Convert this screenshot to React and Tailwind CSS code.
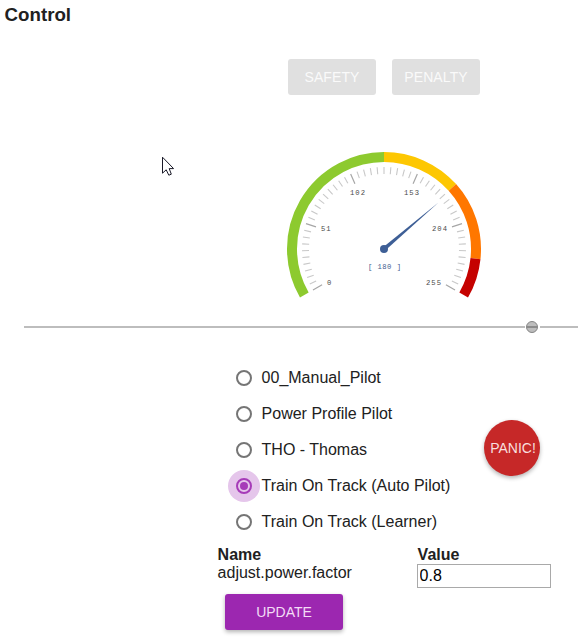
import React from "react";

const CX = 104;
const CY = 104;

const polar = (r, deg) => {
  const a = (deg * Math.PI) / 180;
  return [CX + r * Math.sin(a), CY - r * Math.cos(a)];
};

const arc = (from, to) => {
  const [x1, y1] = polar(92, from);
  const [x2, y2] = polar(92, to);
  return `M${x1} ${y1} A92 92 0 ${to - from > 180 ? 1 : 0} 1 ${x2} ${y2}`;
};

const BANDS = [
  { from: -120, to: 0, color: "#8dca2f" },
  { from: 0, to: 48, color: "#fdc702" },
  { from: 48, to: 96, color: "#ff7700" },
  { from: 96, to: 120, color: "#c50200" },
];

const LABELS = [
  { text: "0", x: 47, y: 140, w: 4.5 },
  { text: "51", x: 41, y: 86, w: 9.5 },
  { text: "102", x: 70, y: 50, w: 15 },
  { text: "153", x: 124, y: 50, w: 15 },
  { text: "204", x: 152, y: 86, w: 15 },
  { text: "255", x: 146, y: 140, w: 15 },
];

function Gauge() {
  const ticks = Array.from({ length: 51 }, (_, i) => i);
  return (
    <svg width="208" height="160" viewBox="0 0 208 160" className="block">
      {BANDS.map((b) => (
        <path key={b.from} d={arc(b.from, b.to)} fill="none" stroke={b.color} strokeWidth="10" />
      ))}
      {ticks.map((i) => {
        const major = i % 10 === 0;
        const deg = -120 + i * 4.8;
        const [x1, y1] = polar(82, deg);
        const [x2, y2] = polar(major ? 71.5 : 75, deg);
        return (
          <line key={i} x1={x1} y1={y1} x2={x2} y2={y2} stroke={major ? "#a6a6a6" : "#c8c8c8"} strokeWidth={major ? 1.2 : 1.1} />
        );
      })}
      {LABELS.map((l) => (
        <text key={l.text} x={l.x} y={l.y} textLength={l.w} fontSize="7.2" fill="#4a4a4a" fontFamily="Liberation Mono, monospace">
          {l.text}
        </text>
      ))}
      <polygon points="102.8,102.6 105.2,105.4 158.5,57.5" fill="#3e5f96" />
      <circle cx={CX} cy={CY} r="4" fill="#3e5f96" />
      <text x="88" y="124" textLength="33" fontSize="7.2" fill="#3f5c8e" fontFamily="Liberation Mono, monospace" xmlSpace="preserve">
        [ 180 ]
      </text>
    </svg>
  );
}

function Radio({ label, checked }) {
  return (
    <div className="flex h-9 items-center">
      <div className={`flex size-8 items-center justify-center rounded-full ${checked ? "bg-[#e5c6eb]" : ""}`}>
        <div className={`flex size-4 items-center justify-center rounded-full border-2 ${checked ? "border-[#a63bb8]" : "border-[#757575]"}`}>
          {checked && <div className="size-2 rounded-full bg-[#a63bb8]" />}
        </div>
      </div>
      <span className="ml-[1.6px] whitespace-nowrap text-base leading-5">{label}</span>
    </div>
  );
}

const PILOTS = [
  "00_Manual_Pilot",
  "Power Profile Pilot",
  "THO - Thomas",
  "Train On Track (Auto Pilot)",
  "Train On Track (Learner)",
];

export default function App() {
  return (
    <div className="relative h-[644px] w-[578px] overflow-hidden bg-white font-['Liberation_Sans',Arial,sans-serif] text-[#212121]">
      <h1 className="h-[59px] pl-[4.6px] pt-1 text-[18.7px] font-bold leading-[22px]">Control</h1>

      <div className="ml-72 flex gap-4">
        {["SAFETY", "PENALTY"].map((t) => (
          <button key={t} className="h-9 w-[88px] rounded-[3px] bg-[#e0e0e0] text-sm tracking-[0.1px] text-[#fafafa]">
            {t}
          </button>
        ))}
      </div>

      <div className="ml-[280px] mt-[50px] h-[160px]">
        <Gauge />
      </div>

      <div className="ml-6 mt-[15px] flex h-[14px] items-center">
        <div className="h-0.5 w-[501px] bg-[#bdbdbd]" />
        <div className="ml-[1px] flex size-3 items-center rounded-full border border-[#858585] bg-[#bdbdbd]">
          <div className="h-0.5 w-full bg-[#8b8b8b]" />
        </div>
        <div className="ml-[2px] h-0.5 flex-1 bg-[#bdbdbd]" />
      </div>

      <div className="ml-[228px] mt-[26px] flex">
        <div className="w-64">
          {PILOTS.map((p) => (
            <Radio key={p} label={p} checked={p === "Train On Track (Auto Pilot)"} />
          ))}
        </div>
        <button className="mt-[60px] size-14 rounded-full bg-[#c62828] pl-0.5 text-sm text-[#f8dfdf] shadow-[0_2px_4px_rgba(0,0,0,0.3)]">
          PANIC!
        </button>
      </div>

      <div className="ml-[217px] mt-1.5 flex h-12 text-base leading-[18px]">
        <div className="w-[200px] pl-[0.6px]">
          <div className="font-bold">Name</div>
          <div>adjust.power.factor</div>
        </div>
        <div>
          <div className="pl-[0.6px] font-bold">Value</div>
          <input
            defaultValue="0.8"
            className="block h-6 w-[134px] border border-[#a9a9a9] bg-white px-[1.6px] text-base text-black outline-none"
          />
        </div>
      </div>

      <button className="ml-[225px] block h-9 w-[118px] rounded-[3px] bg-[#9c27b0] text-sm text-[#f3dcf6] shadow-[0_2px_4px_rgba(0,0,0,0.3)]">
        UPDATE
      </button>

      <svg className="absolute left-[162px] top-[156px]" width="13" height="21" viewBox="0 0 13 21">
        <path d="M.5 1.2V17.2L4.2 13.8L6.8 19.2L9.3 18.2L7.2 12.6H11.6Z" fill="#fff" stroke="#1a1a28" strokeWidth="1" />
      </svg>
    </div>
  );
}
